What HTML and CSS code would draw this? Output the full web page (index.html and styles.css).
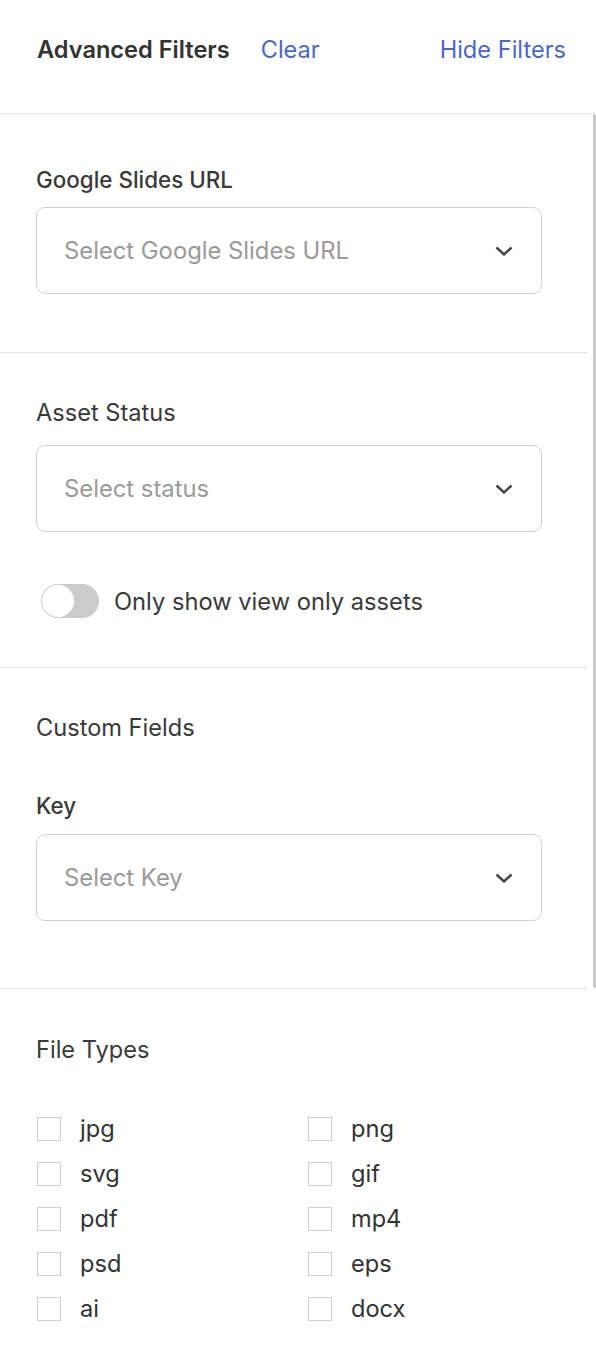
FILE: index.html
```html
<!DOCTYPE html>
<html lang="en">
<head>
    <meta charset="UTF-8">
    <meta name="viewport" content="width=device-width, initial-scale=1.0">
    <title>Advanced Filters</title>
    <link rel="stylesheet" href="styles.css">
</head>
<body>
    <div class="filters">
        <div class="filters-header">
            <span class="title">Advanced Filters</span>
            <a class="link clear-link" href="#">Clear</a>
            <a class="link hide-link" href="#">Hide Filters</a>
        </div>

        <div class="filters-body">
            <div class="panel">
                <div class="section section-slides">
                    <div class="field-label strong">Google Slides URL</div>
                    <div class="select">
                        <span class="placeholder">Select Google Slides URL</span>
                        <svg class="chevron" width="18" height="10" viewBox="0 0 18 10"><path d="M1.5 1.5 L9 8.5 L16.5 1.5" fill="none" stroke="#444" stroke-width="2.4"/></svg>
                    </div>
                </div>

                <div class="section section-status">
                    <div class="field-label">Asset Status</div>
                    <div class="select">
                        <span class="placeholder">Select status</span>
                        <svg class="chevron" width="18" height="10" viewBox="0 0 18 10"><path d="M1.5 1.5 L9 8.5 L16.5 1.5" fill="none" stroke="#444" stroke-width="2.4"/></svg>
                    </div>
                    <label class="toggle-row">
                        <span class="toggle"><span class="knob"></span></span>
                        <span class="toggle-text">Only show view only assets</span>
                    </label>
                </div>

                <div class="section section-custom">
                    <div class="field-label">Custom Fields</div>
                    <div class="field-label strong key-label">Key</div>
                    <div class="select">
                        <span class="placeholder">Select Key</span>
                        <svg class="chevron" width="18" height="10" viewBox="0 0 18 10"><path d="M1.5 1.5 L9 8.5 L16.5 1.5" fill="none" stroke="#444" stroke-width="2.4"/></svg>
                    </div>
                </div>

                <div class="section section-types">
                    <div class="field-label">File Types</div>
                    <div class="types-grid">
                        <label class="type"><span class="box"></span>jpg</label>
                        <label class="type"><span class="box"></span>png</label>
                        <label class="type"><span class="box"></span>svg</label>
                        <label class="type"><span class="box"></span>gif</label>
                        <label class="type"><span class="box"></span>pdf</label>
                        <label class="type"><span class="box"></span>mp4</label>
                        <label class="type"><span class="box"></span>psd</label>
                        <label class="type"><span class="box"></span>eps</label>
                        <label class="type"><span class="box"></span>ai</label>
                        <label class="type"><span class="box"></span>docx</label>
                    </div>
                </div>
            </div>
            <div class="scrollbar"><div class="thumb"></div></div>
        </div>
    </div>
</body>
</html>
```

FILE: styles.css
```css
body {
    margin: 0;
    font-family: Inter, 'Noto Sans', sans-serif;
    color: #3a3a3a;
    background: #fff;
}
.filters {
    width: 596px;
    height: 1350px;
    overflow: hidden;
}
.filters-header {
    height: 114px;
    display: flex;
    align-items: center;
    padding: 0 30px 15px 37px;
    box-sizing: border-box;
    border-bottom: 1px solid #e6e6e6;
    font-size: 23.6px;
}
.title {
    font-weight: 600;
    color: #333;
}
.link {
    color: #4a67c8;
    text-decoration: none;
}
.clear-link {
    margin-left: 31px;
}
.hide-link {
    margin-left: auto;
}
.filters-body {
    display: flex;
}
.panel {
    width: 587px;
}
.section {
    padding: 0 45px 0 36px;
    border-bottom: 1px solid #e3e3e3;
}
.section-slides {
    padding-top: 52px;
    height: 186px;
}
.section-status {
    padding-top: 46px;
    height: 268px;
}
.section-custom {
    padding-top: 46px;
    height: 274px;
}
.section-types {
    padding-top: 47px;
    border-bottom: none;
}
.field-label {
    font-size: 23.6px;
    line-height: 28px;
    color: #3a3a3a;
}
.strong {
    font-weight: 500;
    font-size: 22.4px;
}
.section-slides .field-label {
    margin-bottom: 13px;
}
.section-status .field-label {
    margin-bottom: 18px;
}
.key-label {
    margin-top: 50px;
    margin-bottom: 14px;
}
.select {
    height: 85px;
    border: 1px solid #d2d2d2;
    border-radius: 9px;
    display: flex;
    align-items: center;
    justify-content: space-between;
    padding: 0 28px 0 27px;
}
.placeholder {
    font-size: 23.8px;
    color: #9a9a9a;
}
.toggle-row {
    display: flex;
    align-items: center;
    margin-top: 52px;
    margin-left: 5px;
}
.toggle {
    width: 58px;
    height: 34px;
    border-radius: 17px;
    background: #cbcbcb;
    display: flex;
    align-items: center;
    padding-left: 1px;
    box-sizing: border-box;
}
.knob {
    width: 32px;
    height: 32px;
    border-radius: 50%;
    background: #fff;
    box-shadow: 0 0 0 1px #d4d4d4;
}
.toggle-text {
    margin-left: 15px;
    font-size: 23.7px;
    color: #3a3a3a;
}
.types-grid {
    display: grid;
    grid-template-columns: 271px 1fr;
    row-gap: 21px;
    margin-top: 53px;
}
.type {
    display: flex;
    align-items: center;
    font-size: 23.6px;
    line-height: 24px;
    color: #333;
}
.box {
    width: 24px;
    height: 24px;
    border: 1px solid #cfcfcf;
    box-sizing: border-box;
    margin-right: 19px;
    margin-left: 1px;
}
.scrollbar {
    width: 9px;
}
.thumb {
    width: 3px;
    height: 874px;
    margin-left: 6px;
    background: #c8c8c8;
    border-radius: 2px;
}
```
